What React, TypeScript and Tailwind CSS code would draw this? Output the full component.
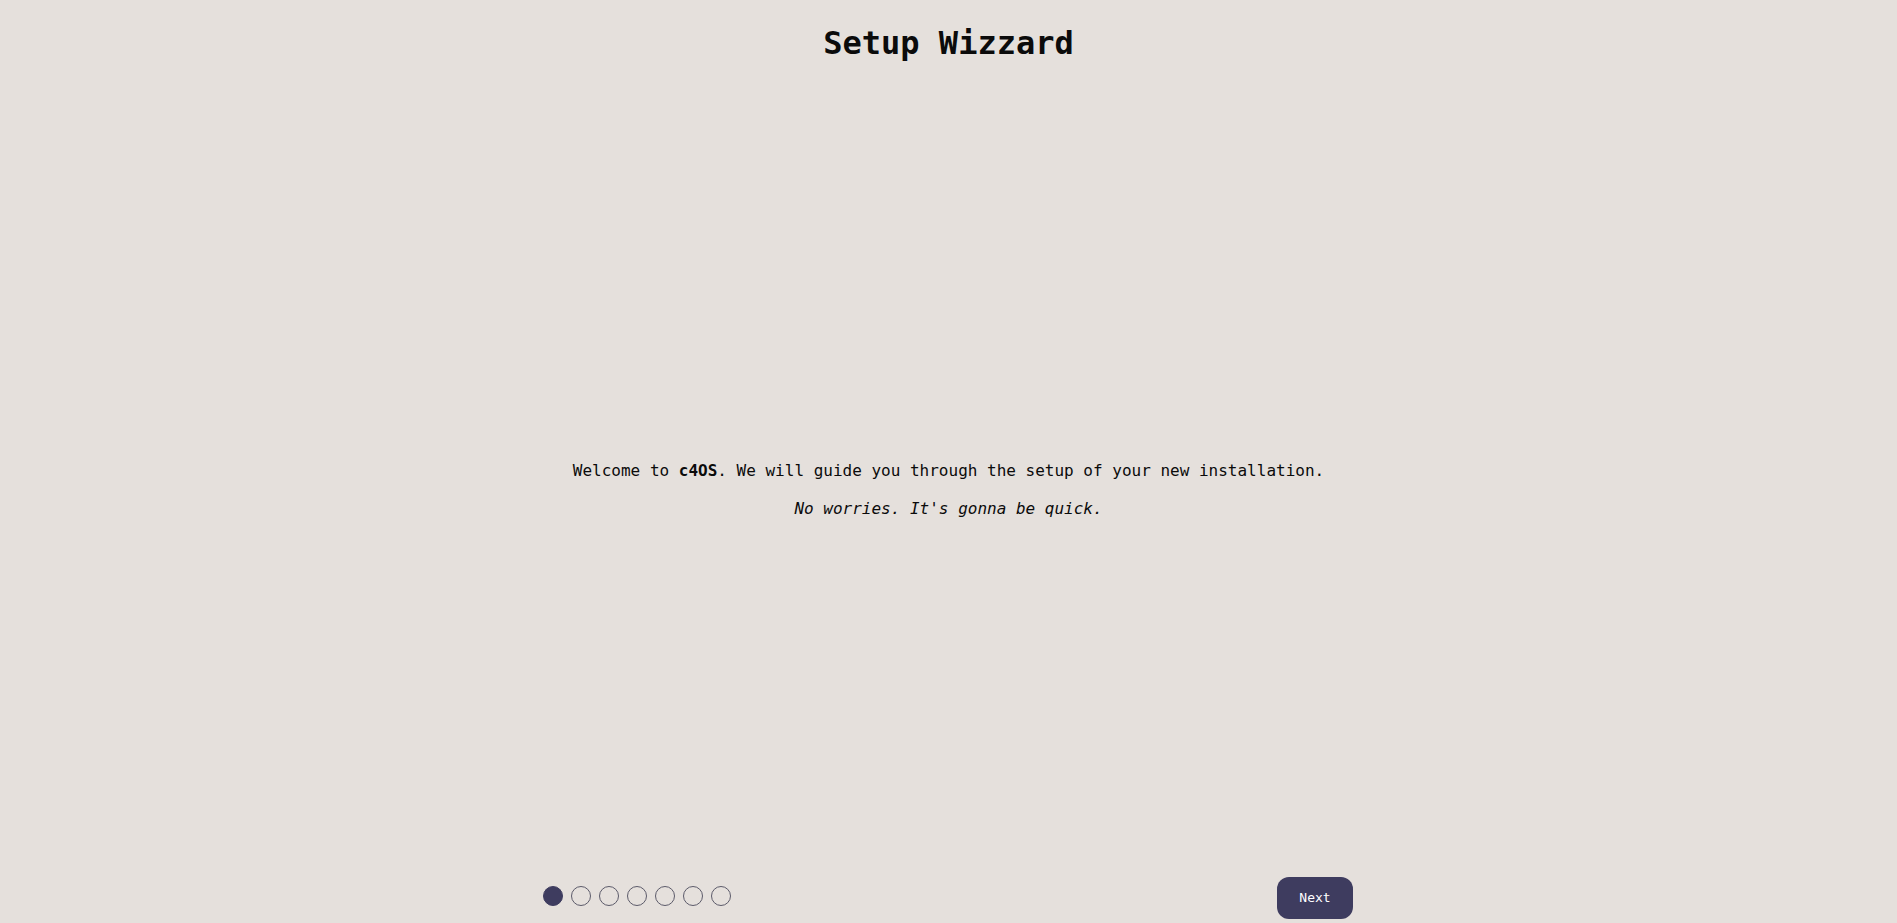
import React, { useState } from 'react';

const STEPS = 7;

const App: React.FC = () => {
  const [step, setStep] = useState(0);

  return (
    <div
      className="flex h-screen flex-col bg-[#e5e0dc] text-[#0b0b0b]"
      style={{ fontFamily: '"DejaVu Sans Mono", monospace' }}
    >
      <header className="flex justify-center pt-[25px]">
        <h1 className="text-[32px] font-bold leading-[37px]">Setup Wizzard</h1>
      </header>

      <main className="flex flex-1 flex-col items-center justify-center gap-[14px] pt-[41px] text-[16px] leading-6">
        <p>
          Welcome to <strong>c4OS</strong>. We will guide you through the setup of your new installation.
        </p>
        <p className="italic">No worries. It's gonna be quick.</p>
      </main>

      <footer className="ml-[543px] flex w-[810px] items-start justify-between pb-[4px]">
        <div className="mt-[9px] flex gap-2">
          {Array.from({ length: STEPS }).map((_, i) => (
            <span
              key={i}
              className={`h-5 w-5 rounded-full border ${
                i === step ? 'border-[#3e3c5f] bg-[#3e3c5f]' : 'border-[#5c5b6a]'
              }`}
            />
          ))}
        </div>
        <button
          className="h-[42px] w-[76px] rounded-xl bg-[#3e3c5f] text-[13px] text-white"
          onClick={() => setStep((s) => Math.min(s + 1, STEPS - 1))}
        >
          Next
        </button>
      </footer>
    </div>
  );
};

export default App;
